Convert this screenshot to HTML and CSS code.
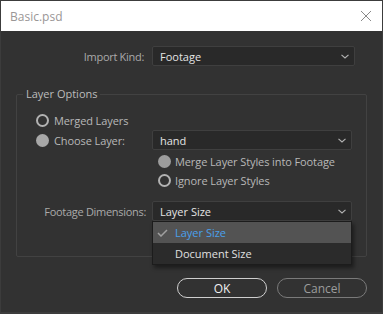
FILE: index.html
```html
<!DOCTYPE html>
<html lang="en">
<head>
    <meta charset="UTF-8">
    <title>Basic.psd</title>
    <link rel="stylesheet" href="styles.css">
</head>
<body>
    <div class="window">
        <div class="titlebar">
            <span class="title">Basic.psd</span>
            <svg class="close" width="12" height="12" viewBox="0 0 12 12"><path d="M1 1L11 11M11 1L1 11"/></svg>
        </div>
        <div class="content">
            <div class="import-row">
                <label class="field-label">Import Kind:</label>
                <div class="select">
                    <span>Footage</span>
                    <svg class="chevron" width="8" height="5" viewBox="0 0 8 5"><path d="M0.5 0.8L4 4L7.5 0.8"/></svg>
                </div>
            </div>

            <fieldset class="group">
                <legend>Layer Options</legend>
                <div class="radio-row first">
                    <span class="radio"></span>Merged Layers
                </div>
                <div class="choose-row">
                    <div class="radio-row">
                        <span class="radio filled"></span>Choose Layer:
                    </div>
                    <div class="select">
                        <span>hand</span>
                        <svg class="chevron" width="8" height="5" viewBox="0 0 8 5"><path d="M0.5 0.8L4 4L7.5 0.8"/></svg>
                    </div>
                </div>
                <div class="sub-options">
                    <div class="radio-row">
                        <span class="radio filled dim"></span>Merge Layer Styles into Footage
                    </div>
                    <div class="radio-row">
                        <span class="radio"></span>Ignore Layer Styles
                    </div>
                </div>
                <div class="dims-row">
                    <label class="field-label">Footage Dimensions:</label>
                    <div class="select open">
                        <span>Layer Size</span>
                        <svg class="chevron" width="8" height="5" viewBox="0 0 8 5"><path d="M0.5 0.8L4 4L7.5 0.8"/></svg>
                        <div class="menu">
                            <div class="menu-item active">
                                <svg class="check" width="11" height="8" viewBox="0 0 11 8"><path d="M1 4L4 7L10 1"/></svg>
                                Layer Size
                            </div>
                            <div class="menu-item">Document Size</div>
                        </div>
                    </div>
                </div>
            </fieldset>

            <div class="buttons">
                <button class="btn primary">OK</button>
                <button class="btn">Cancel</button>
            </div>
        </div>
    </div>
</body>
</html>
```

FILE: styles.css
```css
body {
    margin: 0;
    padding: 0;
    background: #1e1e1e;
    font-family: "Open Sans", "Noto Sans", sans-serif;
    font-size: 11px;
}
.window {
    width: 383px;
    height: 314px;
    box-sizing: border-box;
    border: 1px solid #3c3c3c;
    border-bottom-width: 2px;
    background: #323232;
    color: #b4b4b4;
}
.titlebar {
    height: 30px;
    background: #ffffff;
    display: flex;
    align-items: center;
    justify-content: space-between;
    padding: 0 10px 0 9px;
}
.title {
    color: #9a9696;
    font-size: 12px;
}
.close path {
    stroke: #8a8a8a;
    stroke-width: 1;
    fill: none;
}
.content {
    padding: 15px 15px 0 15px;
}
.import-row {
    display: grid;
    grid-template-columns: 128px 203px;
    column-gap: 8px;
    align-items: center;
}
.field-label {
    text-align: right;
    color: #aaaaaa;
    letter-spacing: -0.3px;
}
.select {
    position: relative;
    height: 20px;
    box-sizing: border-box;
    border: 1px solid #3f3f3f;
    border-radius: 2px;
    background: #292929;
    color: #e4e4e4;
    display: flex;
    align-items: center;
    justify-content: space-between;
    padding: 0 5px 0 7px;
}
.chevron path {
    stroke: #b4b4b4;
    stroke-width: 1.1;
    fill: none;
}
.group {
    margin: 20px 0 0 0;
    padding: 0 0 35px 0;
    border: 1px solid #424242;
    border-radius: 2px;
    min-width: 0;
}
.group legend {
    margin-left: 6px;
    padding: 0 3px;
    line-height: 16px;
    color: #bcbcbc;
}
.radio-row {
    display: flex;
    align-items: center;
    height: 20px;
    color: #b8b8b8;
    letter-spacing: -0.1px;
}
.radio-row.first {
    margin-top: 8px;
    padding-left: 19px;
}
.radio {
    width: 13px;
    height: 13px;
    box-sizing: border-box;
    border: 2px solid #b2b2b2;
    border-radius: 50%;
    margin-right: 5px;
    flex: none;
}
.radio.filled {
    border: none;
    background: #a8a8a8;
}
.radio.filled.dim {
    background: #9c9c9c;
}
.choose-row {
    display: grid;
    grid-template-columns: 135px 200px;
    align-items: center;
}
.choose-row .radio-row {
    padding-left: 19px;
}
.sub-options {
    margin-top: 2px;
    padding-left: 141px;
}
.sub-options .radio-row {
    height: 19px;
}
.sub-options .radio {
    margin-right: 4px;
}
.dims-row {
    display: grid;
    grid-template-columns: 129px 200px;
    column-gap: 6px;
    align-items: center;
    margin-top: 11px;
}
.menu {
    position: absolute;
    top: 19px;
    left: -1px;
    width: 200px;
    box-sizing: border-box;
    border: 1px solid #1c1c1c;
    background: #2b2b2b;
    box-shadow: 2px 3px 4px rgba(0, 0, 0, 0.45);
    z-index: 2;
}
.menu-item {
    position: relative;
    height: 21px;
    line-height: 21px;
    padding-left: 22px;
    color: #e0e0e0;
}
.menu-item.active {
    background: #535353;
    color: #4aa0ec;
}
.check {
    position: absolute;
    left: 4px;
    top: 7px;
}
.check path {
    stroke: #a0a0a0;
    stroke-width: 1.5;
    fill: none;
}
.buttons {
    display: flex;
    justify-content: flex-end;
    gap: 10px;
    margin-top: 21px;
}
.btn {
    width: 90px;
    height: 20px;
    box-sizing: border-box;
    border: 1px solid #7a7a7a;
    border-radius: 10px;
    background: transparent;
    color: #9c9c9c;
    font-family: inherit;
    font-size: 12px;
    padding: 0;
}
.btn.primary {
    border: 1.5px solid #cfcfcf;
    color: #f0f0f0;
}
```
